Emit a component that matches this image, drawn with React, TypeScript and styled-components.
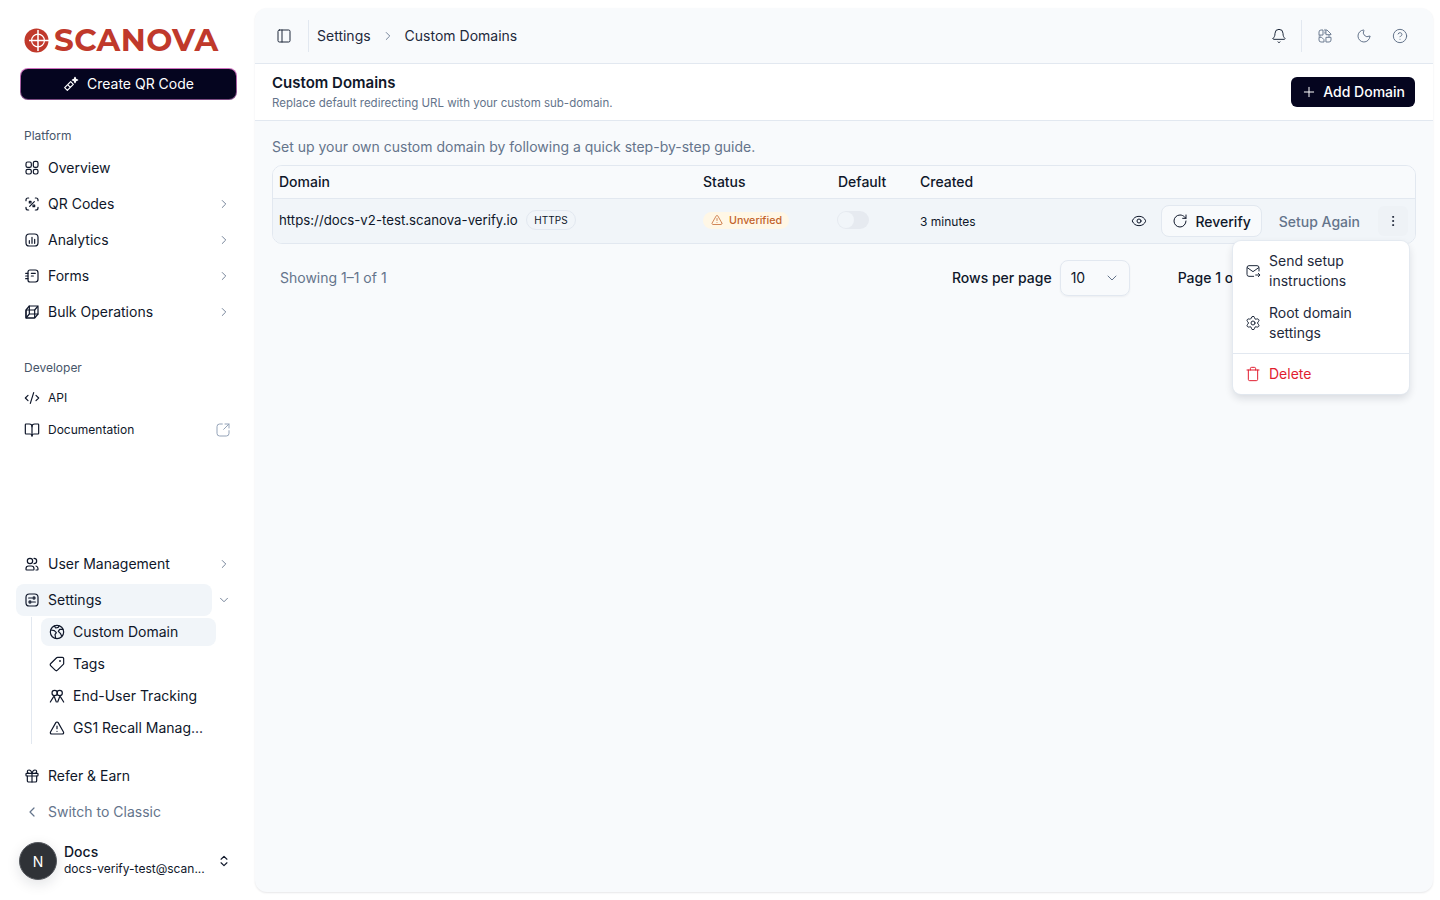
import React from "react";
import styled, { createGlobalStyle } from "styled-components";
import {
    BookOpen,
    Bell,
    ChevronDown,
    ChevronLeft,
    ChevronRight,
    ChevronsUpDown,
    CircleHelp,
    CodeXml,
    EllipsisVertical,
    Eye,
    Gift,
    Moon,
    PanelLeft,
    Plus,
    RotateCw,
    Settings as Gear,
    Tag,
    Trash,
    TriangleAlert,
} from "lucide-react";

const GlobalStyle = createGlobalStyle`
    html, body {
        margin: 0;
        padding: 0;
        height: 100%;
        background: #ffffff;
    }
    body {
        font-family: "Inter", "Liberation Sans", sans-serif;
        color: #0f172a;
        overflow: hidden;
    }
    * {
        box-sizing: border-box;
    }
    svg.lucide {
        stroke-width: 1.5;
    }
`;

type IconProps = { size?: number; weight?: number };

const Base: React.FC<IconProps & { children: React.ReactNode }> = ({ size = 16, weight = 1.8, children }) => (
    <svg
        width={size}
        height={size}
        viewBox="0 0 24 24"
        fill="none"
        stroke="currentColor"
        strokeWidth={weight}
        strokeLinecap="round"
        strokeLinejoin="round"
    >
        {children}
    </svg>
);

const OverviewIcon = () => (
    <Base>
        <rect x="3" y="3" width="8" height="8" rx="2.5" />
        <rect x="14" y="2" width="7" height="9" rx="2.5" />
        <rect x="3" y="14" width="8" height="7" rx="2.5" />
        <rect x="14" y="14" width="7" height="7" rx="2.5" />
    </Base>
);

const ScanIcon = () => (
    <Base>
        <path d="M7 3H6a3 3 0 0 0-3 3v1M17 3h1a3 3 0 0 1 3 3v1M7 21H6a3 3 0 0 1-3-3v-1M17 21h1a3 3 0 0 0 3-3v-1" />
        <rect x="8" y="8" width="2.5" height="2.5" />
        <rect x="13.5" y="13.5" width="2.5" height="2.5" />
        <path d="M15.5 8.5l-7 7" />
    </Base>
);

const AnalyticsIcon = () => (
    <Base>
        <rect x="3" y="3" width="18" height="18" rx="5" />
        <path d="M8 17v-4M12 17V8M16 17v-6" />
    </Base>
);

const FormsIcon = () => (
    <Base>
        <path d="M6 6a3 3 0 0 1 3-3h8a4 4 0 0 1 4 4v10a4 4 0 0 1-4 4H9a3 3 0 0 1-3-3z" />
        <path d="M2.5 8H6M2.5 12H6M2.5 16H6M11 8h6M11 12h3" />
    </Base>
);

const CubeIcon = () => (
    <Base>
        <path d="M3 9l5-6h11a2 2 0 0 1 2 2v10l-5 6H5a2 2 0 0 1-2-2z" />
        <rect x="3" y="9" width="13" height="12" rx="1" />
        <path d="M16 9l5-6M3 21l5-6V3M8 15h13" />
    </Base>
);

const ExternalIcon = () => (
    <Base weight={1.5}>
        <path d="M11 3H7a4 4 0 0 0-4 4v10a4 4 0 0 0 4 4h10a4 4 0 0 0 4-4v-4" />
        <path d="M15 3h6v6M21 3l-8 8" />
    </Base>
);

const UsersIcon = () => (
    <Base>
        <circle cx="9" cy="7.5" r="4" />
        <path d="M3 20v-1a4 4 0 0 1 4-4h4a4 4 0 0 1 4 4v1a1 1 0 0 1-1 1H4a1 1 0 0 1-1-1z" />
        <path d="M15 3.5a4 4 0 0 1 0 8M18 15a4 4 0 0 1 3 4v1a1 1 0 0 1-1 1h-2" />
    </Base>
);

const SlidersIcon = () => (
    <Base>
        <rect x="3" y="3" width="18" height="18" rx="5" />
        <path d="M7 9h5M12 15h5" />
        <circle cx="15" cy="9" r="1.6" />
        <circle cx="9" cy="15" r="1.6" />
    </Base>
);

const EarthIcon = () => (
    <Base>
        <circle cx="12" cy="12" r="10" />
        <path d="M3 9l5 1 3 3-2 3 1 5M21 8h-5l-2 3 3 3 2 4M8 3l2 3 4-1 1-2" />
    </Base>
);

const PeopleIcon = () => (
    <Base>
        <circle cx="8.5" cy="7.5" r="4" />
        <circle cx="16" cy="7.5" r="4" />
        <path d="M2 21l5-8M11 21l-3-8M13 21l3-8M22 21l-5-8" />
    </Base>
);

const GlobeGridIcon = () => (
    <Base weight={1.4}>
        <path d="M3 10V6a3 3 0 0 1 3-3h3v7zM10 21H6a3 3 0 0 1-3-3v-4h4l3 3zM14 3h1l6 6v1h-7zM14 14h7v4a3 3 0 0 1-3 3h-4z" />
        <path d="M12 2v6M3 12h4M17 12h4" strokeDasharray="2 2" />
    </Base>
);

const MailSendIcon = () => (
    <Base weight={1.5}>
        <path d="M21 12V7a3 3 0 0 0-3-3H6a3 3 0 0 0-3 3v10a3 3 0 0 0 3 3h7" />
        <path d="M3.5 7l8.5 6 8.5-6M16 18h6M20 15.5l2.5 2.5-2.5 2.5" />
    </Base>
);

const WandIcon = () => (
    <Base>
        <path d="M2.5 17.5l4 4 9-9-4-4zM7 13l4 4" />
        <path d="M18 2l1.2 2.8L22 6l-2.8 1.2L18 10l-1.2-2.8L14 6l2.8-1.2z" fill="currentColor" />
    </Base>
);

const LogoMark = () => (
    <svg width="25" height="25" viewBox="0 0 25 25">
        <circle cx="12.5" cy="12.5" r="12" fill="#c0392b" />
        <circle cx="14" cy="12.5" r="6.4" fill="none" stroke="#fff" strokeWidth="1.2" />
        <path d="M14 2v21M5 12.5h20" stroke="#fff" strokeWidth="1.5" />
    </svg>
);

const TagIcon = styled(Tag)`
    transform: rotate(90deg);
`;

const Layout = styled.div`
    display: flex;
    width: 1440px;
    height: 900px;
`;

const Sidebar = styled.aside`
    width: 255px;
    flex: none;
    display: flex;
    flex-direction: column;
    padding: 27px 16px 0;
`;

const Logo = styled.div`
    display: flex;
    align-items: center;
    gap: 5px;
    height: 26px;
    padding-left: 8px;
    color: #c0392b;
    font-family: "Montserrat", "Open Sans", "Liberation Sans", sans-serif;
    font-size: 31px;
    font-weight: 700;
    line-height: 26px;
    letter-spacing: 0.4px;
`;

const CreateButton = styled.button`
    display: flex;
    align-items: center;
    justify-content: center;
    gap: 8px;
    width: 217px;
    height: 32px;
    margin: 15px 0 0 4px;
    padding: 0 0 1px;
    border: 1.5px solid transparent;
    border-radius: 8px;
    background: linear-gradient(#05051f, #05051f) padding-box,
        linear-gradient(180deg, #d070c0, #7a4a80) border-box;
    color: #ffffff;
    font: 400 14px "Inter", sans-serif;
    cursor: pointer;
`;

const SectionLabel = styled.div`
    height: 20px;
    padding-left: 8px;
    color: #475569;
    font-size: 12px;
    line-height: 20px;
`;

const Group = styled.div<{ $top: number }>`
    margin-top: ${(p) => p.$top}px;
    display: flex;
    flex-direction: column;
`;

const NavItem = styled.div<{ $small?: boolean; $gapTop?: number; $muted?: boolean }>`
    display: flex;
    align-items: center;
    gap: 8px;
    height: ${(p) => (p.$small ? 32 : 36)}px;
    margin-top: ${(p) => p.$gapTop ?? 0}px;
    padding-left: 8px;
    color: ${(p) => (p.$muted ? "#64748b" : "#0f172a")};
    font-size: ${(p) => (p.$small ? 12 : 14)}px;
    svg {
        flex: none;
        margin-top: 2px;
    }
    svg.lucide {
        stroke-width: 1.8;
    }
`;

const ItemInner = styled.div<{ $active?: boolean }>`
    display: flex;
    align-items: center;
    gap: 8px;
    flex: none;
    width: 196px;
    height: 32px;
    margin: 2px -3px 0 -8px;
    padding: 0 0 2px 8px;
    border-radius: 8px;
    background: ${(p) => (p.$active ? "#f1f5f9" : "transparent")};
`;

const Trailing = styled.span<{ $light?: boolean }>`
    display: flex;
    margin-left: auto;
    margin-right: 8px;
    color: ${(p) => (p.$light ? "#94a3b8" : "#64748b")};
    svg.lucide {
        stroke-width: 1.5;
    }
`;

const SubList = styled.div`
    display: flex;
    flex-direction: column;
    margin-left: 15px;
    padding: 1px 0 0 9px;
    border-left: 1px solid #e2e8f0;
    height: 127px;
`;

const SubItem = styled.div<{ $active?: boolean }>`
    display: flex;
    align-items: center;
    gap: 8px;
    flex: none;
    width: 175px;
    height: 28px;
    margin-bottom: 4px;
    padding: 0 0 2px 8px;
    border-radius: 8px;
    background: ${(p) => (p.$active ? "#f1f5f9" : "transparent")};
    font-size: 14px;
    white-space: nowrap;
    svg {
        margin-top: 2px;
    }
    svg.lucide {
        stroke-width: 1.8;
    }
`;

const Profile = styled.div`
    display: flex;
    align-items: center;
    gap: 7px;
    margin: 13px 0 0 3px;
    height: 38px;
    svg.lucide {
        stroke-width: 2;
    }
`;

const Avatar = styled.div`
    display: flex;
    align-items: center;
    justify-content: center;
    width: 38px;
    height: 38px;
    border-radius: 50%;
    border: 1px solid #55585e;
    background: #2f3237;
    color: #ffffff;
    font-size: 14px;
    box-shadow: 0 4px 14px rgba(15, 23, 42, 0.12);
`;

const ProfileText = styled.div`
    display: flex;
    flex-direction: column;
    width: 146px;
    padding-bottom: 2px;
`;

const ProfileName = styled.span`
    font-size: 14px;
    font-weight: 500;
    line-height: 16px;
`;

const ProfileMail = styled.span`
    margin-top: 1px;
    font-size: 12px;
    line-height: 16px;
    white-space: nowrap;
`;

const Main = styled.main`
    width: 1178px;
    height: 884px;
    margin-top: 8px;
    flex: none;
    border-radius: 12px;
    background: #f8fafc;
    box-shadow: 0 1px 2px rgba(15, 23, 42, 0.1);
    overflow: hidden;
`;

const TopBar = styled.header`
    display: flex;
    align-items: center;
    height: 56px;
    padding: 0 25px 0 21px;
    border-bottom: 1px solid #e2e8f0;
    color: #1e293b;
    font-size: 14px;
`;

const Divider = styled.span<{ $left?: number }>`
    width: 1px;
    height: 32px;
    margin-left: ${(p) => p.$left ?? 0}px;
    background: #e2e8f0;
`;

const Crumbs = styled.div`
    display: flex;
    align-items: center;
    gap: 10px;
    margin-left: 8px;
    svg {
        color: #64748b;
    }
`;

const TopActions = styled.div`
    display: flex;
    align-items: center;
    margin-left: auto;
`;

const TopIcon = styled.span<{ $gap: number; $dim?: boolean }>`
    display: flex;
    margin-left: ${(p) => p.$gap}px;
    color: ${(p) => (p.$dim ? "#64748b" : "#1e293b")};
`;

const TitleBar = styled.section`
    display: flex;
    align-items: center;
    justify-content: space-between;
    height: 57px;
    padding: 0 18px 1px 17px;
    background: #ffffff;
    border-bottom: 1px solid #e2e8f0;
`;

const Title = styled.h1`
    margin: 0;
    font-size: 15px;
    font-weight: 600;
    line-height: 20px;
`;

const Subtitle = styled.p`
    margin: 2px 0 0;
    color: #64748b;
    font-size: 11.5px;
    line-height: 16px;
`;

const PrimaryButton = styled.button`
    display: flex;
    align-items: center;
    gap: 6px;
    height: 30px;
    padding: 0 10px;
    border: 0;
    border-radius: 6px;
    background: #05051f;
    color: #ffffff;
    font: 500 14px "Inter", sans-serif;
`;

const Content = styled.section`
    padding: 16px 17px 0;
`;

const Hint = styled.p`
    margin: 0 0 8px;
    color: #64748b;
    font-size: 14px;
    line-height: 20px;
`;

const TableWrap = styled.div`
    position: relative;
`;

const Table = styled.div`
    border: 1px solid #e2e8f0;
    border-radius: 10px;
    overflow: hidden;
`;

const Row = styled.div<{ $head?: boolean }>`
    display: grid;
    grid-template-columns: 424px 135px 82px 1fr;
    align-items: center;
    height: ${(p) => (p.$head ? 33 : 44)}px;
    padding: ${(p) => (p.$head ? "0 0 1px 6px" : "0 0 0 6px")};
    background: ${(p) => (p.$head ? "#f8fafc" : "#f1f5f9")};
    border-bottom: ${(p) => (p.$head ? "1px solid #e2e8f0" : "0")};
    font-size: 14px;
    font-weight: ${(p) => (p.$head ? 500 : 400)};
`;

const DomainCell = styled.div`
    display: flex;
    align-items: center;
    gap: 8px;
    padding-bottom: 2px;
    font-size: 13.25px;
`;

const Pill = styled.span`
    display: inline-flex;
    align-items: center;
    height: 20px;
    padding: 0 7.5px;
    border: 1px solid #e2e8f0;
    border-radius: 10px;
    font-size: 10px;
    letter-spacing: 0.1px;
`;

const StatusBadge = styled.span`
    display: inline-flex;
    align-items: center;
    gap: 6px;
    width: max-content;
    height: 17px;
    margin-top: -2px;
    padding: 0 7px 0 8px;
    border-radius: 9px;
    background: #fff7e6;
    color: #c2622a;
    font-size: 10.7px;
    font-weight: 500;
`;

const Switch = styled.span`
    display: block;
    width: 32px;
    height: 18px;
    margin: -3px 0 0 -1px;
    border-radius: 9px;
    background: #e6eaf0;
    &::before {
        content: "";
        display: block;
        width: 16px;
        height: 16px;
        margin: 1px;
        border-radius: 50%;
        background: #f1f5f9;
    }
`;

const CreatedCell = styled.div`
    display: flex;
    align-items: center;
    font-size: 12px;
`;

const RowActions = styled.div`
    display: flex;
    align-items: center;
    margin-left: auto;
    margin-right: 7px;
    font-size: 14px;
`;

const ReverifyButton = styled.button`
    display: flex;
    align-items: center;
    gap: 7px;
    height: 32px;
    margin-left: 14px;
    padding: 0 10px;
    border: 1px solid #e2e8f0;
    border-radius: 8px;
    background: #f8fafc;
    color: #0f172a;
    font: 500 14px "Inter", sans-serif;
`;

const GhostText = styled.span`
    margin: 0 18px 0 17px;
    color: #64748b;
    font-weight: 500;
`;

const DotsButton = styled.span`
    display: flex;
    align-items: center;
    justify-content: center;
    width: 30px;
    height: 30px;
    border-radius: 6px;
    background: #eef2f6;
`;

const Pager = styled.div`
    display: flex;
    align-items: center;
    height: 36px;
    margin-top: 16px;
    padding: 0 168px 0 8px;
    font-size: 14px;
`;

const Showing = styled.span`
    margin-bottom: 2px;
    color: #64748b;
`;

const RowsLabel = styled.span`
    margin: 0 0 2px auto;
    font-weight: 500;
`;

const SelectBox = styled.div`
    display: flex;
    align-items: center;
    justify-content: space-between;
    width: 70px;
    height: 36px;
    margin-left: 8px;
    padding: 0 9px 2px 10px;
    border: 1px solid #e2e8f0;
    border-radius: 8px;
    box-shadow: 0 1px 2px rgba(15, 23, 42, 0.05);
    svg {
        margin-top: 2px;
        color: #64748b;
    }
`;

const PageLabel = styled.span`
    margin: 0 0 2px 48px;
    font-weight: 500;
    white-space: nowrap;
`;

const Menu = styled.div`
    position: absolute;
    top: 76px;
    right: 7px;
    width: 176px;
    height: 153px;
    padding: 4px 0;
    border-radius: 8px;
    background: #ffffff;
    box-shadow: 0 0 0 1px rgba(226, 232, 240, 0.8), 0 4px 8px rgba(15, 23, 42, 0.14);
    font-size: 14px;
`;

const MenuItem = styled.div<{ $danger?: boolean }>`
    display: flex;
    align-items: center;
    gap: 8px;
    padding: 6px 12px;
    line-height: 20px;
    color: ${(p) => (p.$danger ? "#e11d2f" : "#1e293b")};
    svg {
        flex: none;
    }
`;

const MenuLine = styled.div`
    height: 1px;
    margin: 4px 0;
    background: #e2e8f0;
`;

const App: React.FC = () => {
    return (
        <>
            <GlobalStyle />
            <Layout>
                <Sidebar>
                    <Logo>
                        <LogoMark />
                        SCANOVA
                    </Logo>
                    <CreateButton>
                        <WandIcon />
                        Create QR Code
                    </CreateButton>

                    <Group $top={26}>
                        <SectionLabel>Platform</SectionLabel>
                        <NavItem $gapTop={3}>
                            <OverviewIcon />
                            Overview
                        </NavItem>
                        <NavItem>
                            <ScanIcon />
                            QR Codes
                            <Trailing><ChevronRight size={14} /></Trailing>
                        </NavItem>
                        <NavItem>
                            <AnalyticsIcon />
                            Analytics
                            <Trailing><ChevronRight size={14} /></Trailing>
                        </NavItem>
                        <NavItem>
                            <FormsIcon />
                            Forms
                            <Trailing><ChevronRight size={14} /></Trailing>
                        </NavItem>
                        <NavItem>
                            <CubeIcon />
                            Bulk Operations
                            <Trailing><ChevronRight size={14} /></Trailing>
                        </NavItem>
                    </Group>

                    <Group $top={29}>
                        <SectionLabel>Developer</SectionLabel>
                        <NavItem $small $gapTop={3}>
                            <CodeXml size={16} />
                            API
                        </NavItem>
                        <NavItem $small>
                            <BookOpen size={16} />
                            Documentation
                            <Trailing $light><ExternalIcon /></Trailing>
                        </NavItem>
                    </Group>

                    <Group $top={100}>
                        <NavItem>
                            <UsersIcon />
                            User Management
                            <Trailing><ChevronRight size={14} /></Trailing>
                        </NavItem>
                        <NavItem>
                            <ItemInner $active>
                                <SlidersIcon />
                                Settings
                            </ItemInner>
                            <Trailing><ChevronDown size={14} /></Trailing>
                        </NavItem>
                        <SubList>
                            <SubItem $active><EarthIcon />Custom Domain</SubItem>
                            <SubItem><TagIcon size={16} />Tags</SubItem>
                            <SubItem><PeopleIcon />End-User Tracking</SubItem>
                            <SubItem><TriangleAlert size={16} />GS1 Recall Manag...</SubItem>
                        </SubList>
                    </Group>

                    <Group $top={13}>
                        <NavItem>
                            <Gift size={16} />
                            Refer & Earn
                        </NavItem>
                        <NavItem $muted>
                            <ChevronLeft size={16} />
                            Switch to Classic
                        </NavItem>
                    </Group>

                    <Profile>
                        <Avatar>N</Avatar>
                        <ProfileText>
                            <ProfileName>Docs</ProfileName>
                            <ProfileMail>docs-verify-test@scan...</ProfileMail>
                        </ProfileText>
                        <ChevronsUpDown size={14} />
                    </Profile>
                </Sidebar>

                <Main>
                    <TopBar>
                        <PanelLeft size={16} />
                        <Divider $left={16} />
                        <Crumbs>
                            Settings
                            <ChevronRight size={14} />
                            Custom Domains
                        </Crumbs>
                        <TopActions>
                            <TopIcon $gap={0}><Bell size={16} /></TopIcon>
                            <TopIcon $gap={14}><Divider /></TopIcon>
                            <TopIcon $gap={15} $dim><GlobeGridIcon /></TopIcon>
                            <TopIcon $gap={23} $dim><Moon size={16} /></TopIcon>
                            <TopIcon $gap={20} $dim><CircleHelp size={16} /></TopIcon>
                        </TopActions>
                    </TopBar>

                    <TitleBar>
                        <div>
                            <Title>Custom Domains</Title>
                            <Subtitle>Replace default redirecting URL with your custom sub-domain.</Subtitle>
                        </div>
                        <PrimaryButton>
                            <Plus size={16} />
                            Add Domain
                        </PrimaryButton>
                    </TitleBar>

                    <Content>
                        <Hint>Set up your own custom domain by following a quick step-by-step guide.</Hint>
                        <TableWrap>
                            <Table>
                                <Row $head>
                                    <span>Domain</span>
                                    <span>Status</span>
                                    <span>Default</span>
                                    <span>Created</span>
                                </Row>
                                <Row>
                                    <DomainCell>
                                        https://docs-v2-test.scanova-verify.io
                                        <Pill>HTTPS</Pill>
                                    </DomainCell>
                                    <StatusBadge>
                                        <TriangleAlert size={12} />
                                        Unverified
                                    </StatusBadge>
                                    <Switch />
                                    <CreatedCell>
                                        3 minutes
                                        <RowActions>
                                            <Eye size={16} />
                                            <ReverifyButton>
                                                <RotateCw size={16} />
                                                Reverify
                                            </ReverifyButton>
                                            <GhostText>Setup Again</GhostText>
                                            <DotsButton><EllipsisVertical size={14} /></DotsButton>
                                        </RowActions>
                                    </CreatedCell>
                                </Row>
                            </Table>
                            <Pager>
                                <Showing>Showing 1–1 of 1</Showing>
                                <RowsLabel>Rows per page</RowsLabel>
                                <SelectBox>
                                    10
                                    <ChevronDown size={16} />
                                </SelectBox>
                                <PageLabel>Page 1 of 1</PageLabel>
                            </Pager>
                            <Menu>
                                <MenuItem>
                                    <MailSendIcon />
                                    <span>Send setup instructions</span>
                                </MenuItem>
                                <MenuItem>
                                    <Gear size={16} />
                                    <span>Root domain settings</span>
                                </MenuItem>
                                <MenuLine />
                                <MenuItem $danger>
                                    <Trash size={16} />
                                    <span>Delete</span>
                                </MenuItem>
                            </Menu>
                        </TableWrap>
                    </Content>
                </Main>
            </Layout>
        </>
    );
};

export default App;
